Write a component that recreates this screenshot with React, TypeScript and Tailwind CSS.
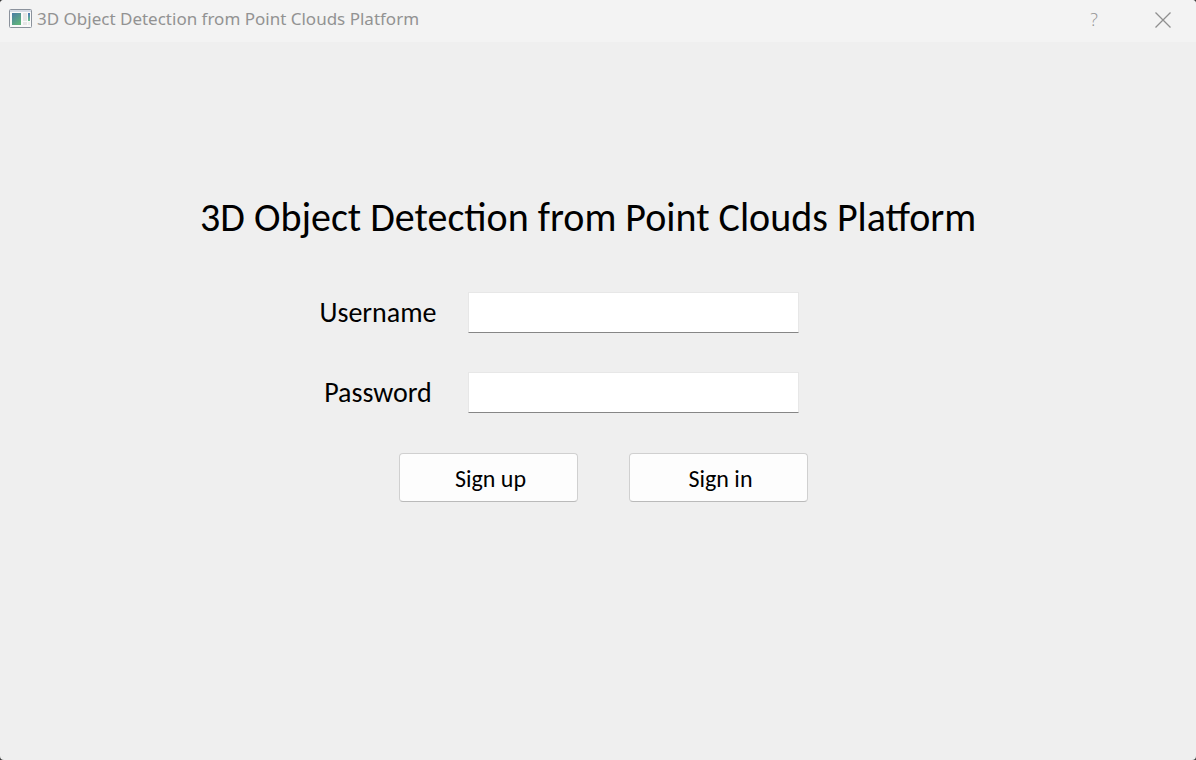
import React from "react";

const TITLE = "3D Object Detection from Point Clouds Platform";

function AppIcon() {
  return (
    <svg width="24" height="20" viewBox="0 0 24 20" aria-hidden="true">
      <defs>
        <linearGradient id="pane" x1="0" y1="0" x2="0.6" y2="1">
          <stop offset="0" stopColor="#4a7ba6" />
          <stop offset="1" stopColor="#5fb37c" />
        </linearGradient>
        <linearGradient id="strip" x1="0" y1="0" x2="0" y2="1">
          <stop offset="0" stopColor="#4a78b8" />
          <stop offset="1" stopColor="#6cc48a" />
        </linearGradient>
      </defs>
      <rect x="0.5" y="0.5" width="22" height="18" rx="1" fill="#fafafa" stroke="#8b929c" />
      <rect x="1" y="1" width="21" height="2" fill="#d5dbe5" />
      <rect x="3" y="4" width="9" height="12" fill="url(#pane)" />
      <rect x="14" y="4" width="4" height="8" fill="#e6e6e6" />
      <rect x="14" y="13" width="4" height="3" fill="#e6e6e6" />
      <rect x="19" y="4" width="2" height="8" fill="url(#strip)" />
      <rect x="19" y="13" width="2" height="3" fill="#ededed" />
    </svg>
  );
}

function TitleBar() {
  return (
    <header className="flex h-[42px] items-start justify-between bg-[#f3f3f3] pl-[9px] text-[#929292]">
      <div className="flex h-[38px] items-center gap-1">
        <AppIcon />
        <span className="whitespace-nowrap font-['Noto_Sans',sans-serif] text-[17px]">{TITLE}</span>
      </div>
      <div className="flex h-[39px]">
        <button type="button" aria-label="Help" className="flex w-[72px] items-center justify-center font-['Open_Sans',sans-serif] text-[18px] font-light">
          ?
        </button>
        <button type="button" aria-label="Close" className="flex w-[66px] items-center justify-center">
          <svg width="16" height="16" viewBox="0 0 16 16" fill="none" stroke="#8f8f8f" strokeWidth="1.3" aria-hidden="true">
            <path d="M0.5 0.5 15.5 15.5M15.5 0.5 0.5 15.5" />
          </svg>
        </button>
      </div>
    </header>
  );
}

function Field({ id, label, type }: { id: string; label: string; type: string }) {
  return (
    <div className="flex items-center gap-[22px] pl-[110px]">
      <label htmlFor={id} className="w-[136px] text-center text-[28px] leading-8">
        {label}
      </label>
      <input
        id={id}
        type={type}
        className="h-[41px] w-[331px] border border-[#e7e7e7] border-b-[#868686] bg-white px-2 text-2xl outline-none"
      />
    </div>
  );
}

function ActionButton({ children, type }: { children: React.ReactNode; type: "button" | "submit" }) {
  return (
    <button
      type={type}
      className="h-[49px] w-[179px] rounded border border-[#d0d0d0] border-b-[#bababa] bg-[#fdfdfd] pl-1 pt-0.5 text-2xl"
    >
      {children}
    </button>
  );
}

export default function App() {
  return (
    <div className="min-h-screen bg-[#3a3a3a]">
      <div className="flex min-h-screen flex-col overflow-hidden rounded-[4px] bg-[#efefef] font-['Carlito','Calibri','Noto_Sans',sans-serif] text-black">
        <TitleBar />
        <main className="mx-auto w-full max-w-[796px] pt-[150px]">
          <h1 className="whitespace-nowrap pr-5 text-center text-[40px] leading-[52px]">{TITLE}</h1>
          <form className="pt-12" onSubmit={(e) => e.preventDefault()}>
            <div className="flex flex-col gap-[39px]">
              <Field id="username" label="Username" type="text" />
              <Field id="password" label="Password" type="password" />
            </div>
            <div className="flex gap-[51px] pl-[199px] pt-10">
              <ActionButton type="button">Sign up</ActionButton>
              <ActionButton type="submit">Sign in</ActionButton>
            </div>
          </form>
        </main>
      </div>
    </div>
  );
}
